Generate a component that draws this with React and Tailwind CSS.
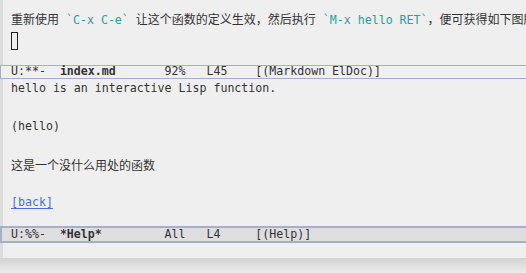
import React from 'react'

const mono = { fontFamily: '"DejaVu Sans Mono", "Noto Sans CJK SC", monospace' }

function Cjk(props)
{
    return (
        <span className="text-[12px]" style={{ fontFamily: '"Noto Sans CJK SC", "Noto Sans", sans-serif' }}>
            {props.children}
        </span>
    )
}

function Code(props)
{
    return <span className="text-[#22a1a6]">{props.children}</span>
}

function ModeLine(props)
{
    const { active, flag, name, pos, line, modes } = props
    return (
        <div
            className={
                active
                    ? 'h-[17px] flex items-center bg-[#dedede] border-y-2 border-l-2 border-[#a5afc8] pl-[9px] text-[11.6px] text-[#333] whitespace-pre'
                    : 'h-[14px] flex items-center bg-[#efefef] border-y border-l border-[#a5afc8] pl-[10px] text-[11.6px] text-[#333] whitespace-pre'
            }
            style={mono}
        >
            <span>{flag}  </span>
            <span className="font-bold">{name}</span>
            <span>{pos}</span>
            <span>{line}</span>
            <span>{modes}</span>
        </div>
    )
}

export default function App()
{
    return (
        <div className="w-[526px] h-[273px] bg-[#ebebeb] overflow-hidden">
            <div className="h-[258px] bg-[#efefef] flex flex-col text-[#333] overflow-hidden" style={mono}>

                <div className="h-[65px] flex flex-row">
                    <div className="w-[3px] bg-[#dcdcdc]"></div>
                    <div className="flex-1 pl-[8px] pt-[9px] text-[11.6px] whitespace-nowrap overflow-hidden">
                        <div className="h-[21px] flex items-center">
                            <span className="whitespace-pre">
                                <Cjk>重新使用</Cjk> <Code>`C-x C-e`</Code> <Cjk>让这个函数的定义生效，然后执行</Cjk> <Code>`M-x hello RET`</Code><Cjk>，便可获得如下图所示</Cjk>
                            </span>
                        </div>
                        <div className="h-[22px] flex items-center">
                            <div className="w-[7px] h-[18px] border-[1.5px] border-[#222]"></div>
                        </div>
                    </div>
                </div>

                <ModeLine
                    flag="U:**-"
                    name="index.md"
                    pos="       92%   "
                    line="L45    "
                    modes="[(Markdown ElDoc)]"
                />

                <div className="flex-1 flex flex-row">
                    <div className="w-[3px] bg-[#dcdcdc]"></div>
                    <div className="flex-1 pl-[8px] text-[11.6px] whitespace-pre overflow-hidden">
                        <div className="h-[19px] flex items-center">hello is an interactive Lisp function.</div>
                        <div className="h-[19px]"></div>
                        <div className="h-[19px] flex items-center">(hello)</div>
                        <div className="h-[19px]"></div>
                        <div className="h-[19px] flex items-center"><Cjk>这是一个没什么用处的函数</Cjk></div>
                        <div className="h-[19px]"></div>
                        <div className="h-[19px] flex items-center">
                            <span className="text-[#4a6ee0] underline underline-offset-2">[back]</span>
                        </div>
                    </div>
                </div>

                <ModeLine
                    active
                    flag="U:%%-"
                    name="*Help*"
                    pos="         All   "
                    line="L4     "
                    modes="[(Help)]"
                />

                <div className="h-[15px] flex flex-row">
                    <div className="w-[3px] bg-[#dcdcdc]"></div>
                </div>
            </div>
            <div className="h-[15px] bg-gradient-to-b from-[#d2d2d2] to-[#ececec]"></div>
        </div>
    )
}
